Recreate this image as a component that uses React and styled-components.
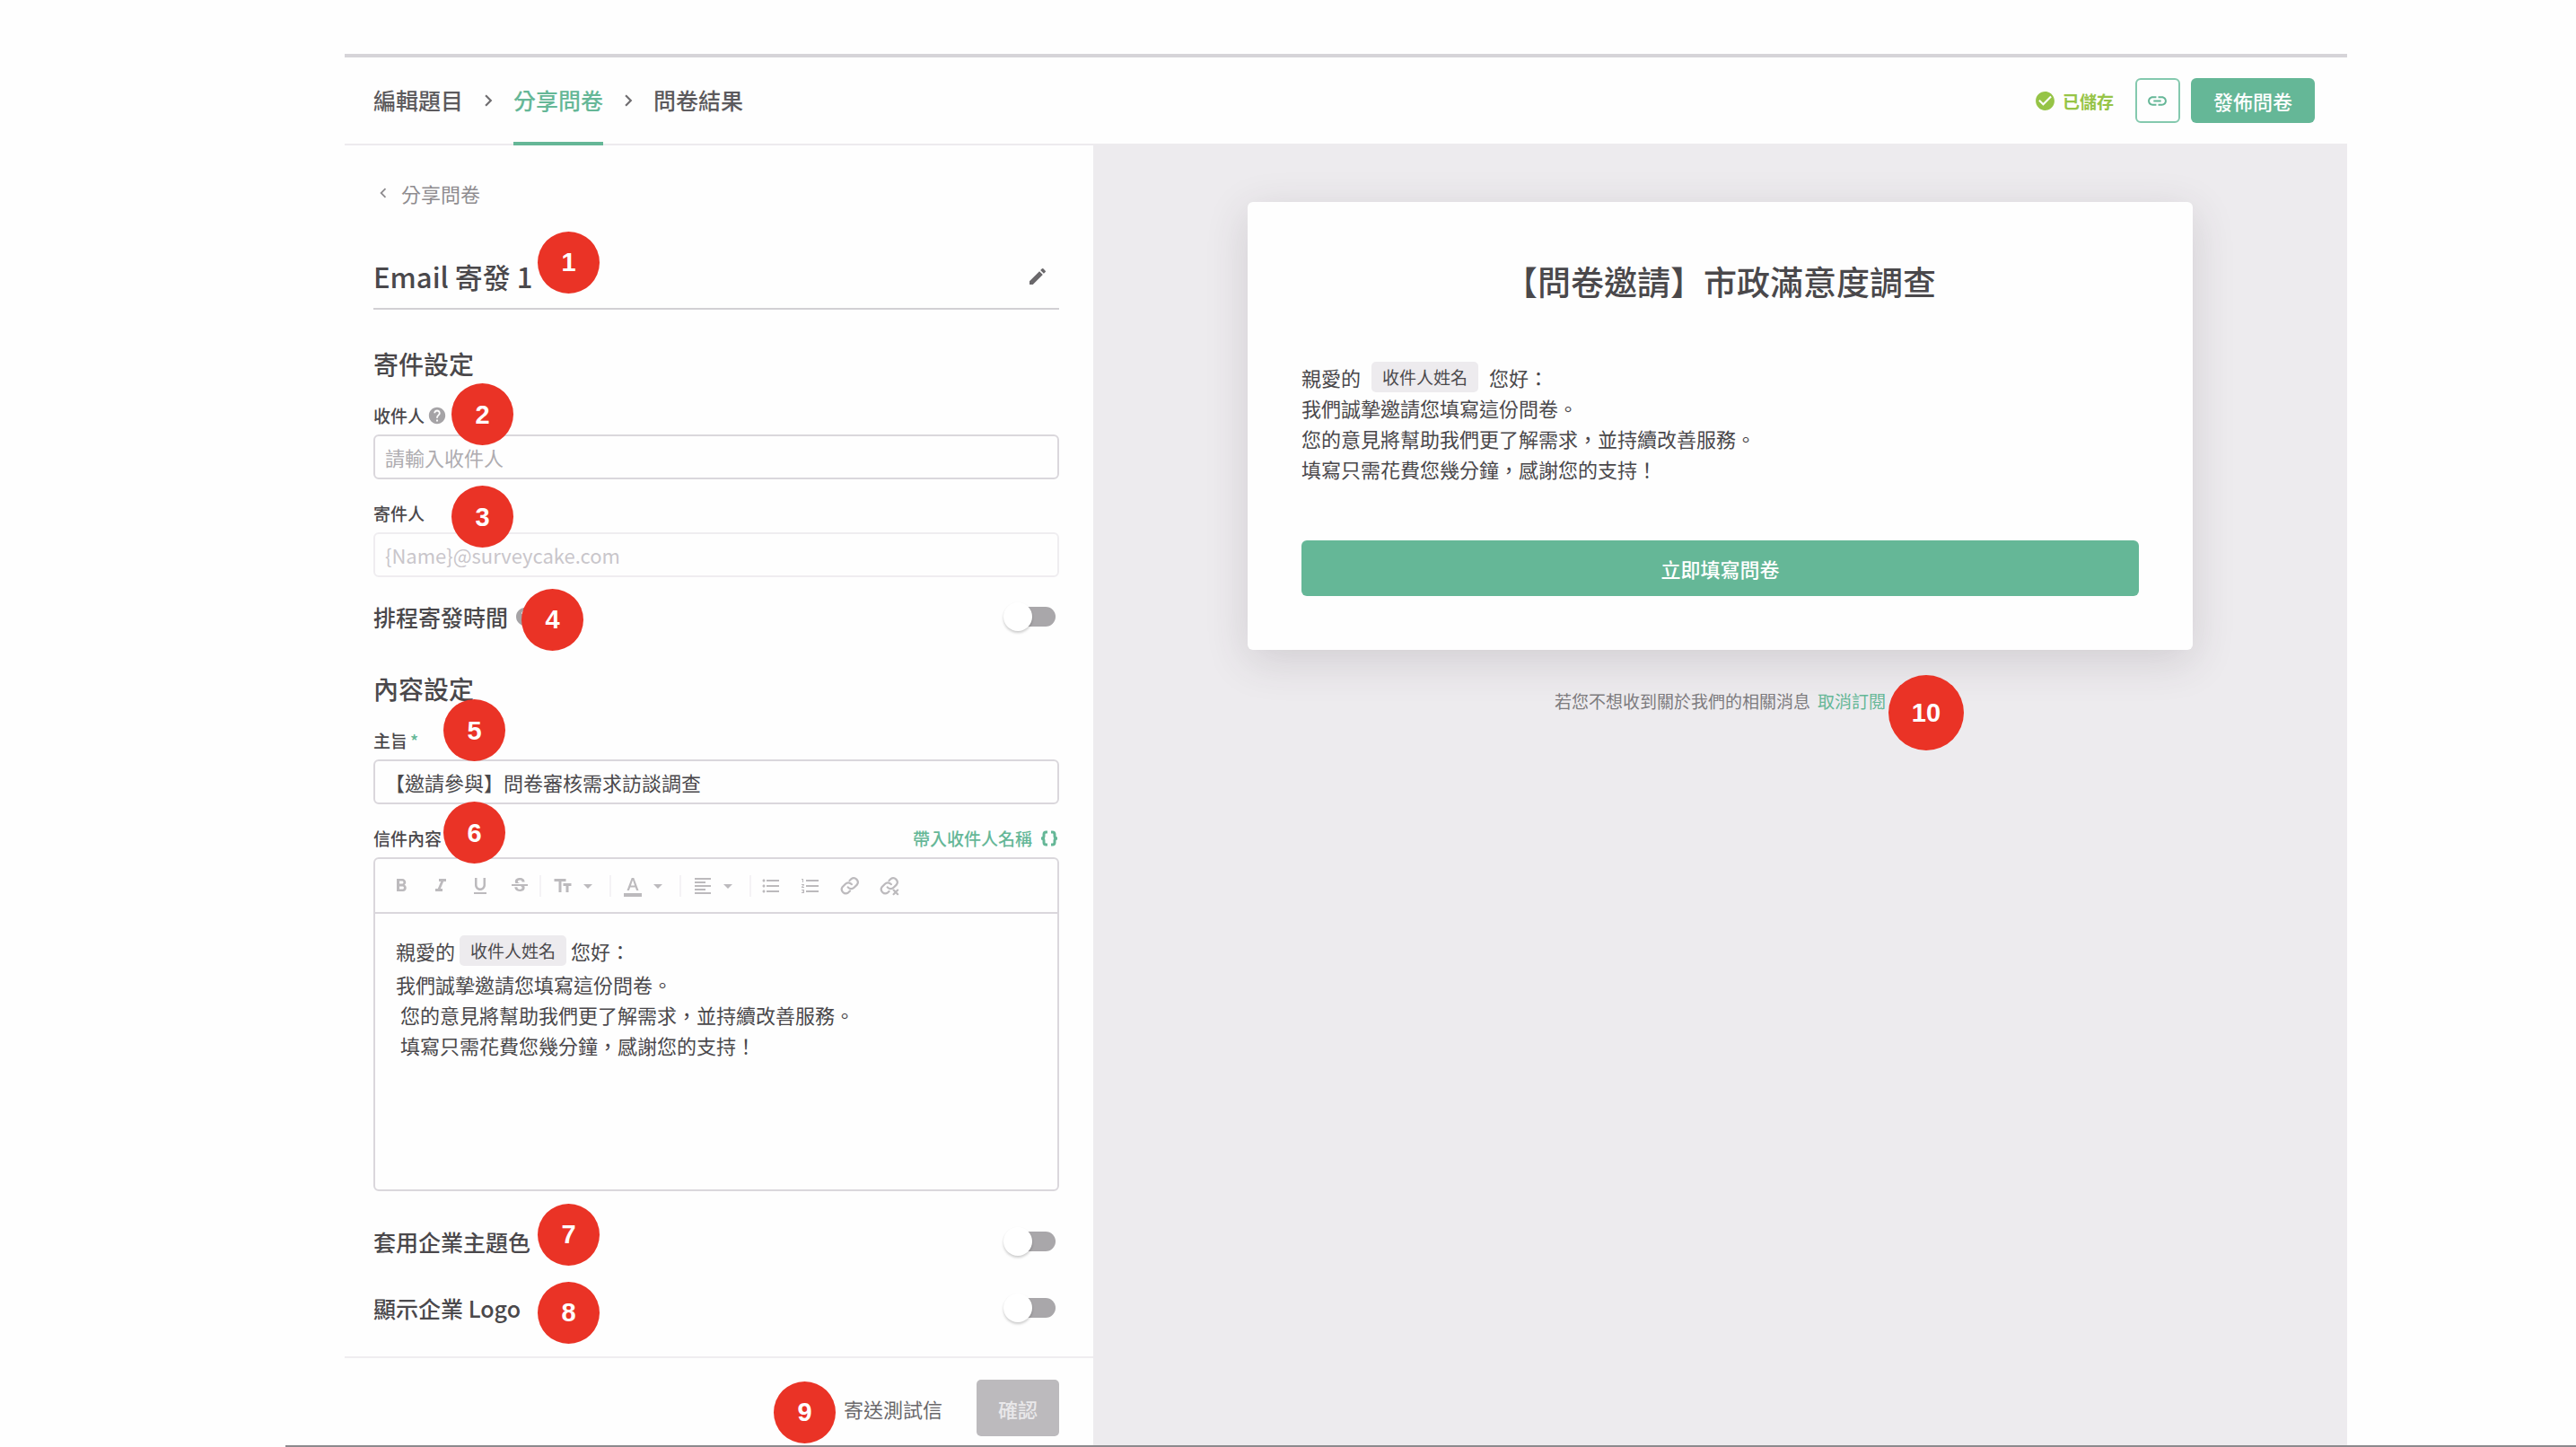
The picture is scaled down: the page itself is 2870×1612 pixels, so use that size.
import React, { useState } from 'react'
import styled, { createGlobalStyle } from 'styled-components'
import {
  MdChevronLeft,
  MdChevronRight,
  MdEdit,
  MdHelp,
  MdCheckCircle,
  MdLink,
  MdFormatBold,
  MdFormatItalic,
  MdFormatUnderlined,
  MdStrikethroughS,
  MdTextFields,
  MdFormatColorText,
  MdFormatAlignLeft,
  MdFormatListBulleted,
  MdFormatListNumbered,
  MdArrowDropDown,
} from 'react-icons/md'

const GlobalStyle = createGlobalStyle`
  * {
    box-sizing: border-box;
  }

  body {
    margin: 0;
    background: #fefefe;
    color: #4a484b;
    font-family: "Noto Sans CJK TC", "Noto Sans", sans-serif;
    font-size: 22px;
  }

  button, input {
    font: inherit;
    color: inherit;
  }

  button {
    border: 0;
    padding: 0;
    background: none;
    cursor: pointer;
  }

  a {
    color: inherit;
    text-decoration: none;
  }

  h1, h2, p {
    margin: 0;
  }
`

const ChainIcon = ({ removed }) => (
  <svg width="22" height="22" viewBox="0 0 24 24" fill="none" stroke="currentColor" strokeWidth="2.4" strokeLinecap="round" strokeLinejoin="round">
    <path d="M9.5 13.5a5 5 0 0 0 7.5.5l3.5-3.5a5 5 0 0 0-7-7L11.500 5.500" />
    <path d={removed ? 'M14 10a5 5 0 0 0-7.500-.5L3 13a5 5 0 0 0 7 7l1.500-1.500' : 'M14 10a5 5 0 0 0-7.500-.5L3 13a5 5 0 0 0 7 7l2-2'} />
    {removed && <path d="M17 17l5 5M22 17l-5 5" />}
  </svg>
)

const BracesIcon = () => (
  <svg width="22" height="18" viewBox="0 0 22 18" fill="none" stroke="currentColor" strokeWidth="3">
    <path d="M9 2H7.500Q5 2 5 4.500V6.500Q5 9 2 9Q5 9 5 11.500V13.500Q5 16 7.500 16H9" />
    <path d="M13 2H14.500Q17 2 17 4.500V6.500Q17 9 20 9Q17 9 17 11.500V13.500Q17 16 14.500 16H13" />
  </svg>
)

const Toggle = ({ id, label, help, children }) => {
  const [on, setOn] = useState(false)
  return (
    <SwitchRow>
      <label htmlFor={id}>{label}</label>
      {help && <MdHelp size={24} color="#a5a3a6" />}
      <Switch id={id} type="checkbox" role="switch" checked={on} onChange={() => setOn(!on)} />
      {children}
    </SwitchRow>
  )
}

const App = () => {
  const [subject, setSubject] = useState('【邀請參與】問卷審核需求訪談調查')
  const [receiver, setReceiver] = useState('')

  return (
    <Page>
      <GlobalStyle />
      <Window>
        <Header>
          <Tabs>
            <Tab href="#edit">編輯題目</Tab>
            <MdChevronRight size={26} />
            <Tab href="#share" $active>分享問卷</Tab>
            <MdChevronRight size={26} />
            <Tab href="#result">問卷結果</Tab>
          </Tabs>
          <Actions>
            <Saved>
              <MdCheckCircle size={25} />
              已儲存
            </Saved>
            <LinkButton aria-label="連結"><MdLink size={25} /></LinkButton>
            <PublishButton>發佈問卷</PublishButton>
          </Actions>
        </Header>

        <Body>
          <Panel>
            <Settings>
              <BackLink href="#share">
                <MdChevronLeft size={22} />
                分享問卷
              </BackLink>
              <TitleRow>
                <h1>Email 寄發 1</h1>
                <button aria-label="編輯名稱"><MdEdit size={24} /></button>
                <Badge $left={183} $top={-17}>1</Badge>
              </TitleRow>

              <Heading>寄件設定</Heading>
              <Field>
                <LabelRow>
                  <label htmlFor="receiver">收件人</label>
                  <MdHelp size={22} color="#a5a3a6" />
                  <Badge $left={87} $top={-22}>2</Badge>
                </LabelRow>
                <TextInput
                  id="receiver"
                  placeholder="請輸入收件人"
                  value={receiver}
                  onChange={(e) => setReceiver(e.target.value)}
                />
              </Field>
              <Field>
                <LabelRow>
                  <label htmlFor="sender">寄件人</label>
                  <Badge $left={87} $top={-17}>3</Badge>
                </LabelRow>
                <TextInput id="sender" placeholder="{Name}@surveycake.com" disabled />
              </Field>
              <Toggle id="schedule" label="排程寄發時間" help>
                <Badge $left={165} $top={-11}>4</Badge>
              </Toggle>

              <Heading>內容設定</Heading>
              <Field>
                <LabelRow>
                  <label htmlFor="subject">主旨</label>
                  <Required>*</Required>
                  <Badge $left={78} $top={-32}>5</Badge>
                </LabelRow>
                <TextInput id="subject" value={subject} onChange={(e) => setSubject(e.target.value)} />
              </Field>
              <Field>
                <LabelRow>
                  <span id="content-label">信件內容</span>
                  <InsertButton>
                    帶入收件人名稱
                    <BracesIcon />
                  </InsertButton>
                  <Badge $left={78} $top={-27}>6</Badge>
                </LabelRow>
                <Editor>
                  <Toolbar>
                    <Tool aria-label="粗體"><MdFormatBold /></Tool>
                    <Tool aria-label="斜體"><MdFormatItalic /></Tool>
                    <Tool aria-label="底線"><MdFormatUnderlined /></Tool>
                    <Tool aria-label="刪除線"><MdStrikethroughS /></Tool>
                    <MenuTool aria-label="文字大小"><MdTextFields /><MdArrowDropDown /></MenuTool>
                    <MenuTool aria-label="文字顏色"><MdFormatColorText /><MdArrowDropDown /></MenuTool>
                    <MenuTool aria-label="對齊"><MdFormatAlignLeft /><MdArrowDropDown /></MenuTool>
                    <Divider />
                    <Tool aria-label="項目清單"><MdFormatListBulleted /></Tool>
                    <Tool aria-label="編號清單"><MdFormatListNumbered /></Tool>
                    <Tool aria-label="加入連結"><ChainIcon /></Tool>
                    <Tool aria-label="移除連結"><ChainIcon removed /></Tool>
                  </Toolbar>
                  <EditorText role="textbox" aria-labelledby="content-label" contentEditable suppressContentEditableWarning>
                    <Greeting $height={40}>親愛的<Chip $gap={5}>收件人姓名</Chip>您好：</Greeting>
                    <p>我們誠摯邀請您填寫這份問卷。</p>
                    <p>&nbsp;您的意見將幫助我們更了解需求，並持續改善服務。</p>
                    <p>&nbsp;填寫只需花費您幾分鐘，感謝您的支持！</p>
                  </EditorText>
                </Editor>
              </Field>

              <Toggles>
                <Toggle id="theme" label="套用企業主題色">
                  <Badge $left={183} $top={-22}>7</Badge>
                </Toggle>
                <Toggle id="logo" label="顯示企業 Logo">
                  <Badge $left={183} $top={-9}>8</Badge>
                </Toggle>
              </Toggles>
            </Settings>
            <Footer>
              <TestButton>
                寄送測試信
                <Badge $left={-78} $top={2}>9</Badge>
              </TestButton>
              <ConfirmButton disabled>確認</ConfirmButton>
            </Footer>
          </Panel>

          <Preview>
            <Card>
              <CardTitle>【問卷邀請】市政滿意度調查</CardTitle>
              <Letter>
                <Greeting $height={34}>親愛的<Chip $gap={12}>收件人姓名</Chip>您好：</Greeting>
                <p>我們誠摯邀請您填寫這份問卷。</p>
                <p>您的意見將幫助我們更了解需求，並持續改善服務。</p>
                <p>填寫只需花費您幾分鐘，感謝您的支持！</p>
              </Letter>
              <FillButton>立即填寫問卷</FillButton>
            </Card>
            <Unsubscribe>
              若您不想收到關於我們的相關消息
              <a href="#unsubscribe">取消訂閱</a>
              <Badge $size={84} $left={372} $top={-15}>10</Badge>
            </Unsubscribe>
          </Preview>
        </Body>
      </Window>
      <BottomLine />
    </Page>
  )
}

const Page = styled.div`
  display: flex;
  flex-direction: column;
  min-height: 100vh;
  padding-top: 60px;
`

const Window = styled.div`
  flex: 1;
  display: flex;
  flex-direction: column;
  margin: 0 255px 0 384px;
  border-top: 4px solid #d6d4d8;
`

const BottomLine = styled.div`
  height: 2px;
  margin-left: 318px;
  background: #8c8a8d;
`

const Header = styled.header`
  display: flex;
  justify-content: space-between;
  height: 98px;
  padding: 0 36px 0 32px;
  border-bottom: 2px solid #edebee;
`

const Tabs = styled.nav`
  display: flex;
  align-items: center;
  font-size: 25px;
  color: #6f6d70;

  svg {
    margin: 0 15px;
  }
`

const Tab = styled.a`
  height: 98px;
  line-height: 94px;
  margin-bottom: -2px;
  color: ${({ $active }) => ($active ? '#65b797' : '#5c5a5d')};
  border-bottom: 4px solid ${({ $active }) => ($active ? '#65b797' : 'transparent')};
  font-weight: 500;
`

const Actions = styled.div`
  display: flex;
  align-items: center;
  gap: 12px;
`

const Saved = styled.span`
  display: flex;
  align-items: center;
  gap: 7px;
  margin-right: 12px;
  font-size: 19px;
  font-weight: 700;
  color: #96c447;
`

const LinkButton = styled.button`
  display: flex;
  align-items: center;
  justify-content: center;
  width: 50px;
  height: 50px;
  border: 2px solid #84c9ae;
  border-radius: 6px;
  color: #65b797;
`

const PublishButton = styled.button`
  height: 50px;
  padding: 0 25px;
  border-radius: 6px;
  background: #65b797;
  color: #fff;
  font-weight: 500;
  line-height: 48px;
`

const Body = styled.main`
  flex: 1;
  display: grid;
  grid-template-columns: 834px 1fr;
`

const Panel = styled.section`
  display: flex;
  flex-direction: column;
  justify-content: space-between;
`

const Settings = styled.div`
  padding: 37px 38px 34px 32px;
`

const BackLink = styled.a`
  display: flex;
  align-items: center;
  gap: 9px;
  height: 32px;
  color: #8e8c8f;
`

const TitleRow = styled.div`
  position: relative;
  display: flex;
  align-items: center;
  justify-content: space-between;
  height: 70px;
  margin-top: 44px;
  padding: 0 12px 3px 0;
  border-bottom: 2px solid #d2d0d4;

  h1 {
    font-size: 31px;
    font-weight: 500;
  }

  button {
    display: flex;
    color: #6a686b;
  }
`

const Heading = styled.h2`
  margin: 40px 0 24px;
  font-size: 28px;
  line-height: 40px;
  font-weight: 500;
`

const Field = styled.div`
  & + & {
    margin-top: 24px;
  }
`

const LabelRow = styled.div`
  position: relative;
  display: flex;
  align-items: center;
  gap: 3px;
  height: 28px;
  margin-bottom: 7px;
  font-size: 19px;
  line-height: 28px;
  font-weight: 500;
`

const Required = styled.span`
  color: #65b797;
`

const TextInput = styled.input`
  display: block;
  width: 100%;
  height: 50px;
  padding: 0 11px;
  border: 2px solid #dad7dc;
  border-radius: 6px;
  background: transparent;

  &::placeholder {
    color: #aeacb0;
  }

  &:disabled {
    border-color: #efedf0;
  }

  &:disabled::placeholder {
    color: #c9c6cb;
  }
`

const SwitchRow = styled.div`
  position: relative;
  display: flex;
  align-items: center;
  gap: 7px;
  height: 40px;
  padding-right: 4px;
  font-size: 25px;
  font-weight: 500;

  ${Field} + & {
    margin-top: 24px;
  }
`

const Switch = styled.input`
  appearance: none;
  position: relative;
  width: 52px;
  height: 22px;
  margin: 0 0 0 auto;
  border-radius: 11px;
  background: ${({ checked }) => (checked ? '#a3d4c1' : '#a9a7aa')};
  cursor: pointer;

  &::before {
    content: '';
    position: absolute;
    top: -5px;
    left: ${({ checked }) => (checked ? '26px' : '-6px')};
    width: 32px;
    height: 32px;
    border-radius: 50%;
    background: #fff;
    box-shadow: 0 2px 3px rgba(0, 0, 0, 0.2);
  }
`

const Toggles = styled.div`
  display: flex;
  flex-direction: column;
  gap: 34px;
  margin-top: 36px;
`

const InsertButton = styled.button`
  display: flex;
  align-items: center;
  gap: 8px;
  margin-left: auto;
  color: #65b797;
`

const Editor = styled.div`
  border: 2px solid #dad7dc;
  border-radius: 6px;
`

const Toolbar = styled.div`
  display: flex;
  align-items: center;
  height: 61px;
  padding-left: 7px;
  border-bottom: 2px solid #dad7dc;
  color: #bcbabd;
  font-size: 24px;
`

const Tool = styled.button`
  display: flex;
  align-items: center;
  justify-content: center;
  width: 44px;
  height: 44px;
`

const MenuTool = styled(Tool)`
  gap: 4px;
  width: 78px;
  height: 24px;
  border-left: 2px solid #f4f2f5;
`

const Divider = styled.span`
  width: 2px;
  height: 24px;
  background: #f4f2f5;
`

const EditorText = styled.div`
  min-height: 307px;
  padding: 21px 23px;
  line-height: 34px;
  outline: none;
`

const Greeting = styled.p`
  display: flex;
  align-items: center;
  height: ${({ $height }) => $height}px;
`

const Chip = styled.span`
  margin: 0 ${({ $gap }) => $gap}px;
  padding: 0 12px;
  border-radius: 5px;
  background: #edebee;
  font-size: 19px;
`

const Footer = styled.footer`
  display: flex;
  align-items: center;
  justify-content: flex-end;
  gap: 38px;
  padding: 24px 38px 10px;
  border-top: 2px solid #efedf0;
`

const TestButton = styled.button`
  position: relative;
  height: 63px;
  color: #6a686b;
`

const ConfirmButton = styled.button`
  height: 63px;
  padding: 0 24px;
  border-radius: 5px;
  background: #bcbabd;
  color: #e9e8ea;
  font-weight: 500;
`

const Preview = styled.section`
  display: flex;
  flex-direction: column;
  align-items: center;
  padding: 63px 24px;
  background: #edebee;
`

const Card = styled.article`
  width: 100%;
  max-width: 1053px;
  padding: 58px 60px 60px;
  border-radius: 6px;
  background: #fefefe;
  box-shadow: 0 12px 48px rgba(60, 50, 65, 0.16);
`

const CardTitle = styled.h2`
  margin-bottom: 60px;
  font-size: 37px;
  line-height: 60px;
  font-weight: 500;
  text-align: center;
`

const Letter = styled.div`
  margin-bottom: 63px;
  line-height: 34px;
`

const FillButton = styled.button`
  display: block;
  width: 100%;
  height: 62px;
  border-radius: 6px;
  background: #65b797;
  color: #fff;
  font-weight: 500;
  line-height: 60px;
`

const Unsubscribe = styled.p`
  position: relative;
  display: flex;
  gap: 8px;
  margin-top: 43px;
  font-size: 19px;
  line-height: 28px;
  color: #7d7b7e;

  a {
    color: #65b797;
  }
`

const Badge = styled.span`
  position: absolute;
  top: ${({ $top }) => $top}px;
  left: ${({ $left }) => $left}px;
  display: flex;
  align-items: center;
  justify-content: center;
  width: ${({ $size = 69 }) => $size}px;
  height: ${({ $size = 69 }) => $size}px;
  border-radius: 50%;
  background: #ea3326;
  color: #fff;
  font-family: "Liberation Sans", Arial, sans-serif;
  font-size: 29px;
  font-weight: 700;
  z-index: 1;
`

export default App
